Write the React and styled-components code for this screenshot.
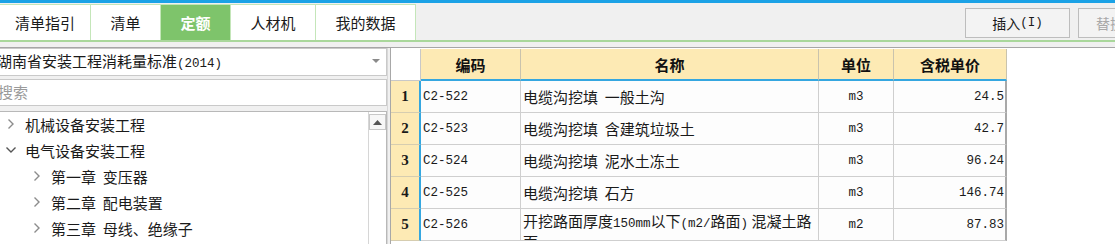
import React from 'react';
import styled, { createGlobalStyle } from 'styled-components';

const GlobalStyle = createGlobalStyle`
  html, body {
    margin: 0;
    padding: 0;
    background: #ffffff;
    overflow: hidden;
  }
  body {
    font-family: "Noto Sans CJK SC", "Liberation Sans", sans-serif;
    color: #1a1a1a;
  }
`;

const tabs = [
  { label: '清单指引', width: 91 },
  { label: '清单', width: 70 },
  { label: '定额', width: 70, active: true },
  { label: '人材机', width: 85 },
  { label: '我的数据', width: 100 },
];

const tree = [
  { label: '机械设备安装工程', level: 0, open: false },
  { label: '电气设备安装工程', level: 0, open: true },
  { label: '第一章  变压器', level: 1, open: false },
  { label: '第二章  配电装置', level: 1, open: false },
  { label: '第三章  母线、绝缘子', level: 1, open: false },
];

const rows = [
  { no: 1, code: 'C2-522', name: '电缆沟挖填  一般土沟', unit: 'm3', price: '24.5' },
  { no: 2, code: 'C2-523', name: '电缆沟挖填  含建筑垃圾土', unit: 'm3', price: '42.7' },
  { no: 3, code: 'C2-524', name: '电缆沟挖填  泥水土冻土', unit: 'm3', price: '96.24' },
  { no: 4, code: 'C2-525', name: '电缆沟挖填  石方', unit: 'm3', price: '146.74' },
  { no: 5, code: 'C2-526', name: null, unit: 'm2', price: '87.83' },
];

const Page = styled.div`
  width: 1115px;
  height: 244px;
  display: flex;
  flex-direction: column;
  overflow: hidden;
`;

const TopStripe = styled.div`
  height: 3px;
  background: #1ba2e6;
  flex: none;
`;

const Toolbar = styled.div`
  height: 37px;
  flex: none;
  display: flex;
  align-items: flex-end;
  background: #f0f0f0;
  border-bottom: 2px solid #a9d79b;
`;

const TabRow = styled.div`
  display: flex;
  height: 36px;
`;

const Tab = styled.div`
  width: ${(p) => p.$w}px;
  box-sizing: border-box;
  display: flex;
  align-items: center;
  justify-content: center;
  font-size: 15px;
  background: ${(p) => (p.$active ? '#7ec46b' : '#ffffff')};
  color: ${(p) => (p.$active ? '#ffffff' : '#1a1a1a')};
  font-weight: ${(p) => (p.$active ? 700 : 400)};
  border-top: 1px solid #c4e6b9;
  border-right: 1px solid #c4e6b9;
`;

const Actions = styled.div`
  margin-left: auto;
  align-self: center;
  display: flex;
  gap: 8px;
  margin-right: -68px;
  padding-top: 2px;
`;

const ToolButton = styled.div`
  width: 105px;
  height: 30px;
  box-sizing: border-box;
  border: 1px solid #bdbdbd;
  background: #f3f3f3;
  display: flex;
  align-items: center;
  justify-content: ${(p) => (p.$disabled ? 'flex-start' : 'center')};
  padding-left: ${(p) => (p.$disabled ? 17 : 0)}px;
  font-size: 14px;
  color: ${(p) => (p.$disabled ? '#a8a8a8' : '#1a1a1a')};
`;

const Band = styled.div`
  height: 5px;
  flex: none;
  background: #f0f0f0;
  border-bottom: 1px solid #a6a6a6;
`;

const Body = styled.div`
  flex: 1;
  display: flex;
  min-height: 0;
`;

const LeftPanel = styled.div`
  width: 387px;
  flex: none;
  display: flex;
  flex-direction: column;
  background: #f0f0f0;
`;

const Combo = styled.div`
  height: 28px;
  box-sizing: border-box;
  border: 1px solid #c9c9c9;
  border-left: none;
  background: #ffffff;
  display: flex;
  align-items: center;
  font-size: 15px;
  overflow: hidden;
  padding-bottom: 3px;
`;

const ComboText = styled.span`
  margin-left: -3px;
  white-space: nowrap;
`;

const Latin = styled.span`
  font-family: "Liberation Mono", monospace;
  font-size: 12.5px;
`;

const ComboArrow = styled.span`
  margin-left: auto;
  margin-right: 6px;
  width: 0;
  height: 0;
  border-left: 4px solid transparent;
  border-right: 4px solid transparent;
  border-top: 4px solid #8a8a8a;
`;

const Search = styled.div`
  margin-top: 3px;
  height: 27px;
  box-sizing: border-box;
  border: 1px solid #c9c9c9;
  border-left: none;
  background: #ffffff;
  display: flex;
  align-items: center;
  font-size: 15px;
  color: #9a9a9a;
  text-indent: -2px;
  padding-bottom: 2px;
`;

const Tree = styled.div`
  margin-top: 5px;
  flex: 1;
  box-sizing: border-box;
  border-top: 1px solid #b8b8b8;
  border-right: 1px solid #b8b8b8;
  background: #ffffff;
  display: flex;
  min-height: 0;
`;

const TreeList = styled.div`
  flex: 1;
  margin-top: -1px;
`;

const TreeItem = styled.div`
  height: 26px;
  display: flex;
  align-items: center;
  padding-left: ${(p) => 3 + p.$level * 26}px;
  font-size: 15px;
  white-space: pre;
`;

const Chevron = styled.span`
  width: 16px;
  height: 16px;
  margin-right: 6px;
  display: flex;
  align-items: center;
  justify-content: center;
`;

const ScrollBar = styled.div`
  width: 17px;
  flex: none;
  border-left: 1px solid #d6d6d6;
  background: #ffffff;
  padding-top: 2px;
`;

const ScrollUp = styled.div`
  height: 16px;
  box-sizing: border-box;
  border: 1px solid #c8c8c8;
  display: flex;
  align-items: center;
  justify-content: center;
  background: #f7f7f7;
`;

const Splitter = styled.div`
  width: 4px;
  flex: none;
  background: #f0f0f0;
  border-left: 1px solid #d8d8d8;
  border-right: 1px solid #a8a8a8;
  box-sizing: border-box;
`;

const GridPanel = styled.div`
  flex: 1;
  background: #ffffff;
  overflow: hidden;
  padding-top: 1px;
`;

const Grid = styled.div`
  display: grid;
  grid-template-columns: 30px 100px 298px 75px 113px;
  grid-auto-rows: 32px;
  grid-template-rows: 32px;
  width: max-content;
`;

const Corner = styled.div`
  background: #ffffff;
  border-right: 1px solid #c8c8c8;
  border-bottom: 1px solid #c8c8c8;
`;

const HeadCell = styled.div`
  background: #fdeab4;
  border-right: 1px solid #c9c3ad;
  border-bottom: 2px solid #35a7e0;
  display: flex;
  align-items: center;
  justify-content: center;
  font-size: 15px;
  font-weight: 700;
  color: #111111;
`;

const RowNo = styled.div`
  background: #fdeab4;
  border-right: 2px solid #35a7e0;
  border-bottom: 1px solid #d6cdb0;
  display: flex;
  align-items: center;
  justify-content: center;
  font-family: "Liberation Serif", serif;
  font-weight: 700;
  font-size: 15px;
`;

const Cell = styled.div`
  background: #fdfdfd;
  border-right: 1px solid #cfcfcf;
  border-bottom: 1px solid #cfcfcf;
  display: flex;
  align-items: center;
  justify-content: ${(p) => p.$align || 'flex-start'};
  padding: 0 2px;
  font-size: ${(p) => (p.$mono ? 12.5 : 15)}px;
  font-family: ${(p) =>
    p.$mono
      ? '"Liberation Mono", "Noto Sans CJK SC", monospace'
      : '"Noto Sans CJK SC", sans-serif'};
  overflow: hidden;
  white-space: pre;
  box-sizing: border-box;
`;

const LastCell = styled(Cell)`
  border-right: 2px solid #a8a8a8;
  padding-right: 1px;
`;

const WrapName = styled.div`
  line-height: 18px;
  margin-top: 14px;
`;

const ArrowRight = () => (
  <svg width="8" height="12" viewBox="0 0 8 12">
    <path d="M1.5 1.5 L6 6 L1.5 10.5" fill="none" stroke="#8c8c8c" strokeWidth="1.4" />
  </svg>
);

const ArrowDown = () => (
  <svg width="12" height="8" viewBox="0 0 12 8">
    <path d="M1.5 1.5 L6 6 L10.5 1.5" fill="none" stroke="#555555" strokeWidth="1.4" />
  </svg>
);

const App = () => {
  return (
    <>
      <GlobalStyle />
      <Page>
        <TopStripe />
        <Toolbar>
          <TabRow>
            {tabs.map((t) => (
              <Tab key={t.label} $w={t.width} $active={t.active}>
                {t.label}
              </Tab>
            ))}
          </TabRow>
          <Actions>
            <ToolButton>
              插入<Latin>(I)</Latin>
            </ToolButton>
            <ToolButton $disabled>替换</ToolButton>
          </Actions>
        </Toolbar>
        <Band />
        <Body>
          <LeftPanel>
            <Combo>
              <ComboText>
                湖南省安装工程消耗量标准<Latin>(2014)</Latin>
              </ComboText>
              <ComboArrow />
            </Combo>
            <Search>搜索</Search>
            <Tree>
              <TreeList>
                {tree.map((item) => (
                  <TreeItem key={item.label} $level={item.level}>
                    <Chevron>{item.open ? <ArrowDown /> : <ArrowRight />}</Chevron>
                    {item.label}
                  </TreeItem>
                ))}
              </TreeList>
              <ScrollBar>
                <ScrollUp>
                  <svg width="9" height="5" viewBox="0 0 9 5">
                    <path d="M0 5 L4.5 0 L9 5 Z" fill="#555555" />
                  </svg>
                </ScrollUp>
              </ScrollBar>
            </Tree>
          </LeftPanel>
          <Splitter />
          <GridPanel>
            <Grid>
              <Corner />
              <HeadCell>编码</HeadCell>
              <HeadCell>名称</HeadCell>
              <HeadCell>单位</HeadCell>
              <HeadCell>含税单价</HeadCell>
              {rows.map((r) => (
                <React.Fragment key={r.no}>
                  <RowNo>{r.no}</RowNo>
                  <Cell $mono>{r.code}</Cell>
                  <Cell>
                    {r.name ? (
                      r.name
                    ) : (
                      <WrapName>
                        开挖路面厚度<Latin>150mm</Latin>以下<Latin>(m2/</Latin>路面<Latin>)</Latin> 混凝土路
                        <br />面
                      </WrapName>
                    )}
                  </Cell>
                  <Cell $mono $align="center">
                    {r.unit}
                  </Cell>
                  <LastCell $mono $align="flex-end">
                    {r.price}
                  </LastCell>
                </React.Fragment>
              ))}
            </Grid>
          </GridPanel>
        </Body>
      </Page>
    </>
  );
};

export default App;
